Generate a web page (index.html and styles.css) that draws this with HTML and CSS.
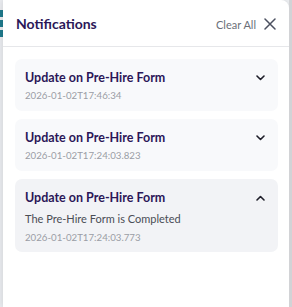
FILE: index.html
```html
<!DOCTYPE html>
<html lang="en">
<head>
  <meta charset="UTF-8" />
  <meta name="viewport" content="width=device-width, initial-scale=1.0" />
  <title>Notifications</title>
  <link rel="stylesheet" href="styles.css">
</head>
<body>
  <!-- Page behind the drawer -->
  <div class="backdrop">
    <span class="tab"></span>
    <span class="tab"></span>
    <span class="tab"></span>
  </div>

  <!-- Notifications drawer -->
  <div class="panel">
    <div class="panel-header">
      <h1>Notifications</h1>
      <div class="header-actions">
        <button class="clear-btn">Clear All</button>
        <button class="close-btn" aria-label="Close">
          <svg width="12" height="12" viewBox="0 0 12 12">
            <path d="M1 1 L11 11 M11 1 L1 11" stroke="#4b5060" stroke-width="1.5" stroke-linecap="round"/>
          </svg>
        </button>
      </div>
    </div>

    <div class="notif-list">
      <div class="notif">
        <div class="notif-top">
          <h2>Update on Pre-Hire Form</h2>
          <svg class="chevron" width="9" height="6" viewBox="0 0 9 6">
            <path d="M1 1 L4.5 4.5 L8 1" fill="none" stroke="#1f1f2a" stroke-width="1.6" stroke-linecap="round" stroke-linejoin="round"/>
          </svg>
        </div>
        <div class="notif-time">2026-01-02T17:46:34</div>
      </div>

      <div class="notif">
        <div class="notif-top">
          <h2>Update on Pre-Hire Form</h2>
          <svg class="chevron" width="9" height="6" viewBox="0 0 9 6">
            <path d="M1 1 L4.5 4.5 L8 1" fill="none" stroke="#1f1f2a" stroke-width="1.6" stroke-linecap="round" stroke-linejoin="round"/>
          </svg>
        </div>
        <div class="notif-time">2026-01-02T17:24:03.823</div>
      </div>

      <div class="notif open">
        <div class="notif-top">
          <h2>Update on Pre-Hire Form</h2>
          <svg class="chevron" width="9" height="6" viewBox="0 0 9 6">
            <path d="M1 5 L4.5 1.5 L8 5" fill="none" stroke="#1f1f2a" stroke-width="1.6" stroke-linecap="round" stroke-linejoin="round"/>
          </svg>
        </div>
        <p class="notif-body">The Pre-Hire Form is Completed</p>
        <div class="notif-time">2026-01-02T17:24:03.773</div>
      </div>
    </div>
  </div>

  <div class="edge"></div>
</body>
</html>
```

FILE: styles.css
```css
/* Global */
body {
  margin: 0;
  padding: 0;
  font-family: Lato, "Noto Sans", sans-serif;
  background: #eef0f3;
  display: flex;
  height: 307px;
  overflow: hidden;
}
button {
  border: none;
  background: none;
  padding: 0;
  cursor: pointer;
  font-family: inherit;
}

/* Page behind the drawer */
.backdrop {
  width: 3px;
  padding-top: 10px;
  display: flex;
  flex-direction: column;
  gap: 3px;
  background: #e9ebef;
}
.tab {
  display: block;
  height: 7px;
  background: #1f7a8c;
}

/* Drawer */
.panel {
  width: 286px;
  background: #fff;
  border-top-right-radius: 8px;
  box-shadow: 0 0 6px rgba(0, 0, 0, 0.12);
}
.panel-header {
  box-sizing: border-box;
  height: 47px;
  display: flex;
  align-items: center;
  justify-content: space-between;
  padding: 2px 13px 0;
  border-bottom: 1px solid #e6e7ea;
}
.panel-header h1 {
  margin: 0;
  font-size: 14px;
  line-height: 18px;
  font-weight: 700;
  color: #2b1758;
}
.header-actions {
  display: flex;
  align-items: center;
  gap: 8px;
}
.clear-btn {
  font-size: 11px;
  color: #6b6f78;
}
.close-btn {
  display: flex;
}

/* Notification cards */
.notif-list {
  padding: 12px 11px 0 12px;
  display: flex;
  flex-direction: column;
  gap: 8px;
}
.notif {
  background: #f8f9fb;
  border-radius: 7px;
  padding: 10px 13px 9px 10px;
}
.notif.open {
  background: #f2f3f6;
  padding-bottom: 8px;
}
.notif-top {
  display: flex;
  align-items: center;
  justify-content: space-between;
  height: 17px;
}
.notif h2 {
  margin: 0;
  font-size: 12.5px;
  line-height: 17px;
  font-weight: 700;
  color: #2b1758;
}
.notif-body {
  margin: 6px 0 0;
  font-size: 11px;
  line-height: 14px;
  color: #4a4d55;
}
.notif-time {
  margin-top: 3px;
  font-size: 9.7px;
  line-height: 13px;
  color: #9a9da5;
}
.notif-body + .notif-time {
  margin-top: 5px;
}

/* Right edge */
.edge {
  width: 3px;
  background: #d2d3d6;
}
```
